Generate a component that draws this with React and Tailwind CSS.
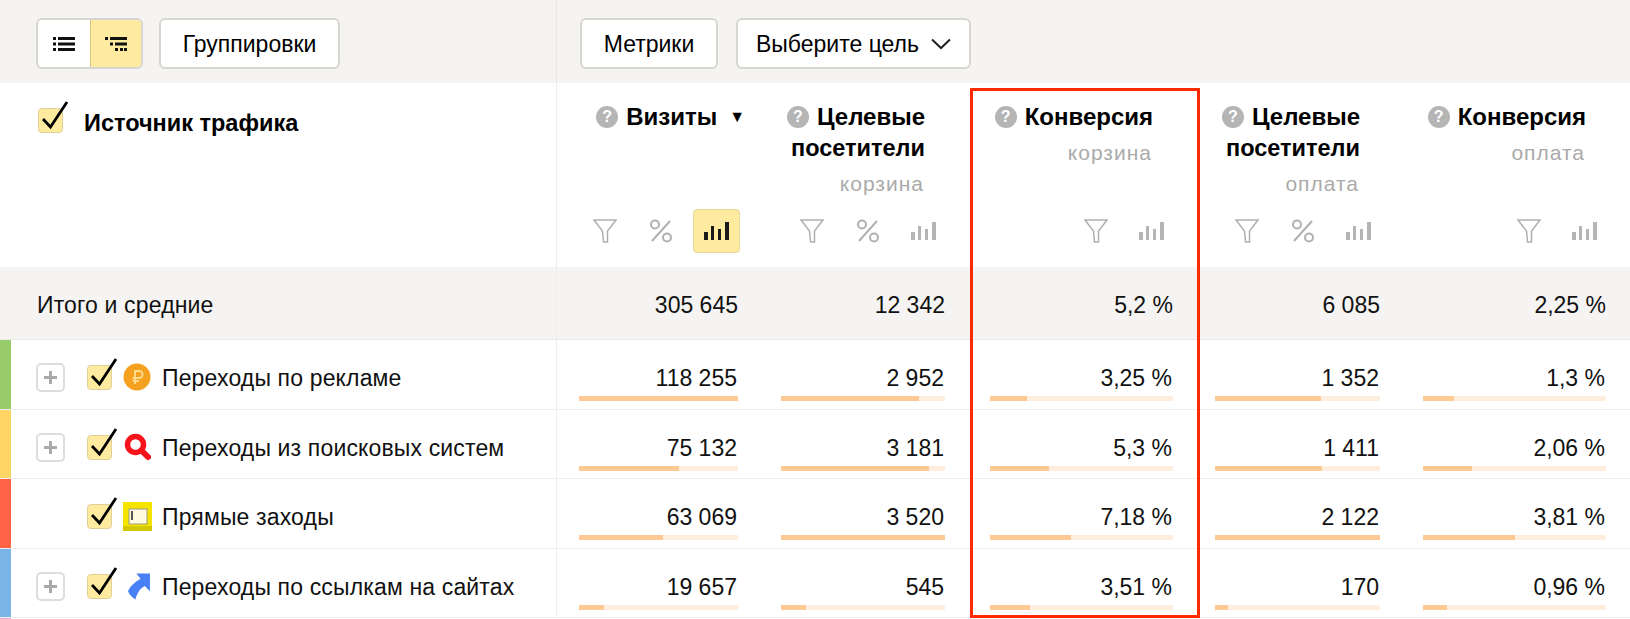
const columns = [
  { cell: 'w-[202px]', inner: 'w-[159px]', title: ['Визиты'], arrow: true, percent: true, active: true },
  { cell: 'w-[209px]', inner: 'w-[164px]', title: ['Целевые', 'посетители'], sub: 'корзина', percent: true },
  { cell: 'w-[225px]', inner: 'w-[183px]', title: ['Конверсия'], sub: 'корзина' },
  { cell: 'w-[208px]', inner: 'w-[165px]', title: ['Целевые', 'посетители'], sub: 'оплата', percent: true },
  { cell: 'w-[229px]', inner: 'w-[183px]', title: ['Конверсия'], sub: 'оплата' },
];

const totals = ['305 645', '12 342', '5,2 %', '6 085', '2,25 %'];

const rows = [
  {
    name: 'Переходы по рекламе',
    color: 'bg-[#98cb6a]',
    icon: 'coin',
    plus: true,
    values: [['118 255', 100], ['2 952', 84], ['3,25 %', 20], ['1 352', 64], ['1,3 %', 17]],
  },
  {
    name: 'Переходы из поисковых систем',
    color: 'bg-[#ffd666]',
    icon: 'search',
    plus: true,
    values: [['75 132', 63], ['3 181', 90], ['5,3 %', 32], ['1 411', 65], ['2,06 %', 27]],
  },
  {
    name: 'Прямые заходы',
    color: 'bg-[#ff6244]',
    icon: 'window',
    values: [['63 069', 53], ['3 520', 100], ['7,18 %', 44], ['2 122', 100], ['3,81 %', 50]],
  },
  {
    name: 'Переходы по ссылкам на сайтах',
    color: 'bg-[#78b4e6]',
    icon: 'link',
    plus: true,
    values: [['19 657', 16], ['545', 15], ['3,51 %', 22], ['170', 8], ['0,96 %', 13]],
  },
];

const Checkbox = ({ className }) => (
  <div className={`relative w-[25px] h-[25px] rounded-[4px] bg-[#ffeba0] border border-[#e0d098] shrink-0 ${className}`}>
    <svg className="absolute left-0 -top-[9px] overflow-visible" width="32" height="34" viewBox="0 0 32 34" fill="none">
      <path d="M4 19 L11.500 27 L28 2" stroke="#000" strokeWidth="2.8" />
    </svg>
  </div>
);

const SourceIcon = ({ type }) => {
  if (type === 'coin') {
    return (
      <svg width="28" height="28" viewBox="0 0 28 28">
        <circle cx="14" cy="14" r="13.500" fill="#f5a11f" />
        <path d="M12 21 V8 H16 A3.400 3.400 0 0 1 16 15 H9.500 M9.500 18 H16" fill="none" stroke="#ffd98c" strokeWidth="2" />
      </svg>
    );
  }
  if (type === 'search') {
    return (
      <svg width="28" height="28" viewBox="0 0 28 28" fill="none">
        <circle cx="12.500" cy="11.500" r="8" stroke="#f6131b" strokeWidth="5.500" />
        <path d="M19 18 L25 24" stroke="#f6131b" strokeWidth="6" strokeLinecap="round" />
      </svg>
    );
  }
  if (type === 'window') {
    return (
      <svg width="29" height="29" viewBox="0 0 29 29">
        <rect width="29" height="29" fill="#f4e400" />
        <rect y="24" width="29" height="5" fill="#d4c800" />
        <rect x="6" y="7" width="18" height="15" fill="#fffbe0" stroke="#9a9a80" strokeWidth="1" />
        <rect x="8" y="9" width="2" height="9" fill="#555" />
      </svg>
    );
  }
  return (
    <svg className="ml-[5px] mt-[1px]" width="23" height="27" viewBox="0 0 22 25">
      <path d="M8 0 H21 V17 L16 12 C12 14 9 18 7 25 C4 23 1 20 0 17 C2 12 7 8 12 5 Z" fill="#4a80f5" />
    </svg>
  );
};

const FilterIcon = () => (
  <svg width="24" height="24" viewBox="0 0 24 24" fill="none" stroke="#b0b0b0" strokeWidth="1.500">
    <path d="M1 1 H23 L14.500 12 V23 H10.500 L9.500 12 Z" />
  </svg>
);

const PercentIcon = () => (
  <svg width="24" height="24" viewBox="0 0 24 24" fill="none" stroke="#b0b0b0" strokeWidth="2">
    <circle cx="6" cy="5.500" r="4" />
    <circle cx="18" cy="18.500" r="4" />
    <path d="M21 2 L3 22" />
  </svg>
);

const ChartIcon = ({ color }) => (
  <svg width="26" height="20" viewBox="0 0 26 20" fill={color}>
    <rect x="0" y="11" width="4" height="8" />
    <rect x="7" y="5" width="3" height="14" />
    <rect x="14" y="8" width="3" height="11" />
    <rect x="21" y="1" width="4" height="18" />
  </svg>
);

const QuestionIcon = () => (
  <div className="w-[22px] h-[22px] rounded-full bg-[#b5b5b5] text-white text-[16px] leading-[22px] font-bold text-center shrink-0">?</div>
);

const HeaderCell = ({ col }) => (
  <div className={`${col.cell} pl-[23px] h-[184px] shrink-0`}>
    <div className={`${col.inner} h-full relative flex flex-col items-end`}>
      <div className={`flex flex-col items-end pt-[18px] ${col.arrow ? 'mr-[-6px]' : 'pr-[21px]'}`}>
        <div className="flex items-center gap-[8px] h-[31px]">
          <QuestionIcon />
          <span className="font-bold text-black text-[24px]">{col.title[0]}</span>
          {col.arrow && <span className="text-[16px] ml-[4px] text-black">▼</span>}
        </div>
        {col.title[1] && <div className="font-bold text-[23.500px] h-[31px] leading-[33px] text-black">{col.title[1]}</div>}
        {col.sub && <div className="text-[21px] tracking-[1px] text-[#aaa] leading-[24px] mt-[9px] mr-[1px]">{col.sub}</div>}
      </div>
      <div className="absolute right-[-1px] top-[126px] flex items-center gap-[9px]">
        <div className="w-[47px] h-[44px] flex items-center justify-center"><FilterIcon /></div>
        {col.percent && <div className="w-[47px] h-[44px] flex items-center justify-center"><PercentIcon /></div>}
        <div className={`w-[47px] h-[44px] flex items-center justify-center rounded-[4px] ${col.active ? 'bg-[#ffeba0] border border-[#e8d898]' : ''}`}>
          <ChartIcon color={col.active ? '#1a1a1a' : '#b5b5b5'} />
        </div>
      </div>
    </div>
  </div>
);

const App = () => {
  return (
    <div className="relative w-[1630px] h-[619px] overflow-hidden bg-white text-[#111] text-[23px] font-['Liberation_Sans',Arial,sans-serif]">
      <div className="flex h-[83px] bg-[#f5f4f2]">
        <div className="w-[557px] shrink-0 border-r border-[#e8e8e8] pl-[36px] pt-[18px] flex gap-[16px]">
          <div className="flex w-[107px] h-[51px] rounded-[6px] border-2 border-[#d8d6d0] overflow-hidden bg-white">
            <div className="w-[52px] flex items-center justify-center">
              <svg width="22" height="16" viewBox="0 0 22 16" fill="#111">
                <path d="M0 1h3v3H0zM5 1h17v3H5zM0 6.500h3v3H0zM5 6.500h17v3H5zM0 12h3v3H0zM5 12h17v3H5z" />
              </svg>
            </div>
            <div className="flex-1 bg-[#ffeba0] border-l border-[#d8c888] flex items-center justify-center">
              <svg width="22" height="16" viewBox="0 0 22 16" fill="#111">
                <path d="M0 1h3v3H0zM5 1h17v3H5zM5 6.500h3v3H5zM10 6.500h12v3H10zM10 12h3v3h-3zM15 12h3v3h-3zM19 12h3v3h-3z" />
              </svg>
            </div>
          </div>
          <button className="w-[181px] h-[51px] rounded-[6px] border-2 border-[#d8d6d0] bg-white text-[23px] text-black pt-[1px]">Группировки</button>
        </div>
        <div className="pl-[23px] pt-[18px] flex gap-[18px]">
          <button className="w-[138px] h-[51px] rounded-[6px] border-2 border-[#d8d6d0] bg-white text-[23px] text-black pt-[1px]">Метрики</button>
          <button className="w-[235px] h-[51px] rounded-[6px] border-2 border-[#d8d6d0] bg-white text-[23px] text-black flex items-center justify-center gap-[12px] pt-[1px]">
            Выберите цель
            <svg width="20" height="12" viewBox="0 0 20 12" fill="none" stroke="#222" strokeWidth="2"><path d="M1 1.500 L10 10 L19 1.500" /></svg>
          </button>
        </div>
      </div>

      <div className="flex h-[184px]">
        <div className="w-[557px] shrink-0 border-r border-[#eeeeee] flex items-start pl-[38px] pt-[25px] gap-[21px]">
          <Checkbox />
          <span className="font-bold text-[23.500px] leading-[24px] text-black mt-[3px]">Источник трафика</span>
        </div>
        {columns.map((col, i) => <HeaderCell key={i} col={col} />)}
      </div>

      <div className="flex h-[73px] bg-[#f5f4f2] border-b border-[#e8e8e8]">
        <div className="w-[557px] shrink-0 border-r border-[#eeeeee] pl-[37px] pt-[4px] flex items-center tracking-[0.150px]">Итого и средние</div>
        {columns.map((col, i) => (
          <div key={i} className={`${col.cell} pl-[23px] pt-[4px] flex items-center shrink-0`}>
            <div className={`${col.inner} text-right pr-[1px]`}>{totals[i]}</div>
          </div>
        ))}
      </div>

      {rows.map((row) => (
        <div key={row.name} className="flex h-[69.500px] border-b border-[#eeeeee]">
          <div className="w-[557px] shrink-0 border-r border-[#eeeeee] flex">
            <div className={`w-[11px] h-full ${row.color}`}></div>
            <div className="w-[25px]"></div>
            <div className="w-[51px] pt-[23px] shrink-0">
              {row.plus && (
                <div className="w-[29px] h-[29px] rounded-[5px] border-2 border-[#dddddd] flex items-center justify-center">
                  <svg width="15" height="15" viewBox="0 0 15 15" fill="#aaa"><path d="M6 1h3v5h5v3H9v5H6V9H1V6h5z" /></svg>
                </div>
              )}
            </div>
            <Checkbox className="mt-[25px]" />
            <div className="w-[29px] ml-[11px] pt-[23px] shrink-0"><SourceIcon type={row.icon} /></div>
            <span className="ml-[10px] pt-[22px] leading-[32px] tracking-[0.150px] whitespace-nowrap">{row.name}</span>
          </div>
          {row.values.map(([value, pct], i) => (
            <div key={i} className={`${columns[i].cell} pl-[22px] shrink-0`}>
              <div className={`${columns[i].inner} pt-[22px]`}>
                <div className="text-right leading-[32px] pr-[1px]">{value}</div>
                <div className="h-[5px] mt-[2px] bg-[#ffeedd]">
                  <div className="h-full bg-[#ffc993]" style={{ width: `${pct}%` }}></div>
                </div>
              </div>
            </div>
          ))}
        </div>
      ))}
      <div className="w-[11px] h-[2px] bg-[#e8a8d8]"></div>

      <div className="absolute left-[970px] top-[88px] w-[230px] h-[530px] border-[3px] border-[#ff2a00] pointer-events-none"></div>
    </div>
  );
};

export default App;
